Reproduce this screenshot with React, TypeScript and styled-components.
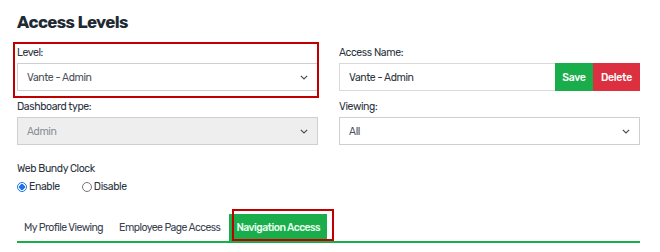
import * as React from 'react';
import styled, { createGlobalStyle } from 'styled-components';

const GlobalStyle = createGlobalStyle`
  body {
    margin: 0;
    background: #ffffff;
    font-family: Rubik, Roboto, "Liberation Sans", sans-serif;
    color: #212529;
  }
`;

const Page = styled.div`
  width: 660px;
  height: 252px;
  box-sizing: border-box;
  padding: 11px 20px 0 17px;
  overflow: hidden;
`;

const Title = styled.h1`
  margin: 0 0 13px 0;
  font-size: 17px;
  line-height: 22px;
  font-weight: 700;
  letter-spacing: -0.6px;
  color: #1d2a33;
`;

const FormGrid = styled.div`
  display: grid;
  grid-template-columns: 301px 301px;
  column-gap: 21px;
  row-gap: 9px;
`;

const Field = styled.div`
  position: relative;
  display: flex;
  flex-direction: column;
`;

const Highlight = styled.div`
  position: absolute;
  left: -4px;
  top: -4px;
  right: -1px;
  bottom: -7px;
  border: 2px solid #c00000;
  pointer-events: none;
`;

const Label = styled.label`
  font-size: 10.5px;
  letter-spacing: -0.4px;
  line-height: 14px;
  color: #2b3440;
  margin-bottom: 3px;
`;

const SelectBox = styled.div<{ $disabled?: boolean }>`
  height: 28px;
  box-sizing: border-box;
  border: 1px solid #cfcfcf;
  background: ${(p) => (p.$disabled ? '#eeeeee' : '#ffffff')};
  display: flex;
  align-items: center;
  justify-content: space-between;
  padding: 0 9px 0 9px;
  font-size: 10.5px;
  letter-spacing: -0.4px;
  color: ${(p) => (p.$disabled ? '#8a8f94' : '#4a5058')};
`;

const InputRow = styled.div`
  display: flex;
  height: 28px;
`;

const TextInput = styled.div`
  flex: 1;
  box-sizing: border-box;
  border: 1px solid #d9d9d9;
  border-right: none;
  display: flex;
  align-items: center;
  padding: 0 9px;
  font-size: 10.5px;
  letter-spacing: -0.4px;
  color: #2b3440;
`;

const ActionButton = styled.button<{ $color: string; $width: number }>`
  width: ${(p) => p.$width}px;
  border: none;
  margin: 0;
  background: ${(p) => p.$color};
  color: #ffffff;
  font-family: inherit;
  font-size: 10.5px;
  letter-spacing: -0.3px;
  font-weight: 500;
  padding: 0;
`;

const Section = styled.div`
  margin-top: 17px;
`;

const SectionTitle = styled.div`
  font-size: 10.5px;
  letter-spacing: -0.4px;
  line-height: 14px;
  color: #2b3440;
  margin-bottom: 4px;
`;

const RadioGroup = styled.div`
  display: flex;
  gap: 22px;
  font-size: 10.5px;
  letter-spacing: -0.4px;
  color: #2b3440;
`;

const RadioOption = styled.label`
  display: flex;
  align-items: center;
  gap: 2px;
  line-height: 14px;
`;

const RadioDot = styled.span<{ $checked?: boolean }>`
  width: 10px;
  height: 10px;
  box-sizing: border-box;
  border-radius: 50%;
  border: 1px solid ${(p) => (p.$checked ? '#1a73e8' : '#767676')};
  background: ${(p) =>
    p.$checked ? 'radial-gradient(circle, #1a73e8 0 2.6px, #ffffff 3px)' : '#ffffff'};
`;

const Tabs = styled.div`
  margin-top: 20px;
  display: flex;
  align-items: stretch;
  border-bottom: 2px solid #1aad4c;
  height: 27px;
  width: 623px;
`;

const Tab = styled.div<{ $active?: boolean }>`
  position: relative;
  display: flex;
  align-items: center;
  padding: 0 7px;
  margin-right: 2px;
  font-size: 10.5px;
  letter-spacing: -0.55px;
  color: ${(p) => (p.$active ? '#e9fff0' : '#3a4350')};
  background: ${(p) => (p.$active ? '#1aad4c' : 'transparent')};
  font-weight: ${(p) => (p.$active ? 500 : 400)};
`;

const TabHighlight = styled.div`
  position: absolute;
  left: 3px;
  right: -7px;
  top: -5px;
  bottom: 0px;
  border: 2px solid #c00000;
`;

const Chevron = () => (
  <svg width="8" height="5" viewBox="0 0 8 5">
    <path d="M0.8 0.8 L4 4 L7.2 0.8" fill="none" stroke="#4a4f55" strokeWidth="1.2" />
  </svg>
);

const Select = ({ value, disabled }: { value: string; disabled?: boolean }) => (
  <SelectBox $disabled={disabled}>
    <span>{value}</span>
    <Chevron />
  </SelectBox>
);

const App = () => {
  return (
    <Page>
      <GlobalStyle />
      <Title>Access Levels</Title>
      <FormGrid>
        <Field>
          <Highlight />
          <Label>Level:</Label>
          <Select value="Vante - Admin" />
        </Field>
        <Field>
          <Label>Access Name:</Label>
          <InputRow>
            <TextInput>Vante - Admin</TextInput>
            <ActionButton $color="#1aad4c" $width={38}>Save</ActionButton>
            <ActionButton $color="#dc3040" $width={47}>Delete</ActionButton>
          </InputRow>
        </Field>
        <Field>
          <Label>Dashboard type:</Label>
          <Select value="Admin" disabled />
        </Field>
        <Field>
          <Label>Viewing:</Label>
          <Select value="All" />
        </Field>
      </FormGrid>
      <Section>
        <SectionTitle>Web Bundy Clock</SectionTitle>
        <RadioGroup>
          <RadioOption>
            <RadioDot $checked />
            Enable
          </RadioOption>
          <RadioOption>
            <RadioDot />
            Disable
          </RadioOption>
        </RadioGroup>
      </Section>
      <Tabs>
        <Tab>My Profile Viewing</Tab>
        <Tab>Employee Page Access</Tab>
        <Tab $active>
          Navigation Access
          <TabHighlight />
        </Tab>
      </Tabs>
    </Page>
  );
};

export default App;
